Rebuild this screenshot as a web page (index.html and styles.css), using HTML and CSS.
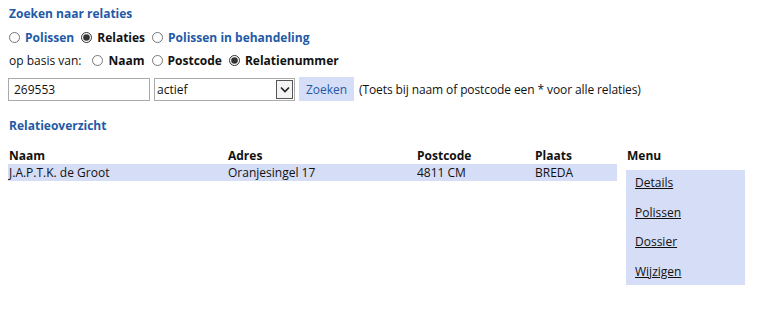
FILE: index.html
```html
<!DOCTYPE html>
<html lang="nl">
<head>
  <meta charset="UTF-8">
  <title>Zoeken naar relaties</title>
  <link rel="stylesheet" href="styles.css">
</head>
<body>
  <div class="page">
    <h2 class="title">Zoeken naar relaties</h2>

    <div class="radio-row">
      <label class="opt link"><input type="radio" name="soort"> Polissen</label>
      <label class="opt"><input type="radio" name="soort" checked> Relaties</label>
      <label class="opt link"><input type="radio" name="soort"> Polissen in behandeling</label>
    </div>

    <div class="radio-row basis">
      <span class="lbl">op basis van:</span>
      <label class="opt"><input type="radio" name="basis"> Naam</label>
      <label class="opt"><input type="radio" name="basis"> Postcode</label>
      <label class="opt"><input type="radio" name="basis" checked> Relatienummer</label>
    </div>

    <div class="search-row">
      <input type="text" class="field" value="269553">
      <div class="select">
        <span class="select-text">actief</span>
        <span class="select-arrow">
          <svg width="10" height="7" viewBox="0 0 10 7"><path d="M1 1.5 L5 5.5 L9 1.5" fill="none" stroke="#222" stroke-width="1.6"/></svg>
        </span>
      </div>
      <button class="btn">Zoeken</button>
      <span class="hint">(Toets bij naam of postcode een * voor alle relaties)</span>
    </div>

    <h2 class="title sub">Relatieoverzicht</h2>

    <div class="overview">
      <table class="results">
        <thead>
          <tr>
            <th class="c-naam">Naam</th>
            <th class="c-adres">Adres</th>
            <th class="c-pc">Postcode</th>
            <th>Plaats</th>
          </tr>
        </thead>
        <tbody>
          <tr>
            <td>J.A.P.T.K. de Groot</td>
            <td>Oranjesingel 17</td>
            <td>4811 CM</td>
            <td>BREDA</td>
          </tr>
        </tbody>
      </table>

      <div class="menu">
        <div class="menu-head">Menu</div>
        <ul class="menu-list">
          <li><a href="#">Details</a></li>
          <li><a href="#">Polissen</a></li>
          <li><a href="#">Dossier</a></li>
          <li><a href="#">Wijzigen</a></li>
        </ul>
      </div>
    </div>
  </div>
</body>
</html>
```

FILE: styles.css
```css
* {
  margin: 0;
  padding: 0;
  box-sizing: border-box;
}

body {
  font-family: 'Open Sans', 'Liberation Sans', sans-serif;
  font-size: 12px;
  color: #111;
  background: #fff;
}

.page {
  padding: 6px 8px;
}

.title {
  font-size: 12px;
  font-weight: bold;
  color: #1f5aa6;
  line-height: 16px;
  margin-left: 1px;
}

.title.sub {
  margin-top: 17px;
}

/* radio rows */
.radio-row {
  display: flex;
  align-items: center;
  height: 23px;
  margin-top: 4px;
}

.radio-row.basis {
  margin-top: 0;
}

.opt {
  display: flex;
  align-items: center;
  font-weight: bold;
  margin-right: 6px;
}

.opt.link {
  color: #1f5aa6;
}

.opt input {
  width: 11px;
  height: 11px;
  margin: 0 5px 0 1px;
  accent-color: #333;
}

.lbl {
  margin: 0 10px 0 1px;
}

/* search row */
.search-row {
  display: flex;
  align-items: center;
  margin-top: 5px;
  height: 24px;
}

.field {
  width: 142px;
  height: 23px;
  border: 1px solid #aaa;
  padding: 0 5px;
  font: inherit;
  color: #111;
}

.select {
  display: flex;
  align-items: stretch;
  width: 141px;
  height: 23px;
  margin-left: 4px;
  border: 1px solid #aaa;
}

.select-text {
  flex: 1;
  padding-left: 2px;
  line-height: 21px;
}

.select-arrow {
  width: 17px;
  margin: 1px;
  border: 1px solid #555;
  background: #f4f4f4;
  display: flex;
  align-items: center;
  justify-content: center;
}

.btn {
  width: 55px;
  height: 24px;
  margin-left: 4px;
  border: none;
  background: #d6ddf6;
  color: #1f5aa6;
  font: inherit;
}

.hint {
  margin-left: 5px;
  letter-spacing: -0.1px;
}

/* overview */
.overview {
  display: flex;
  align-items: flex-start;
  margin-top: 12px;
}

.results {
  width: 609px;
  border-collapse: collapse;
}

.results th {
  text-align: left;
  font-weight: bold;
  height: 18px;
  padding: 0 1px 1px;
  vertical-align: bottom;
  line-height: 15px;
}

.results td {
  background: #d6ddf6;
  height: 17px;
  padding: 0 1px;
  line-height: 17px;
}

.c-naam { width: 219px; }
.c-adres { width: 189px; }
.c-pc { width: 118px; }

.menu {
  margin-left: 9px;
  width: 119px;
}

.menu-head {
  font-weight: bold;
  line-height: 15px;
  height: 24px;
  padding: 2px 0 0 1px;
}

.menu-list {
  list-style: none;
  background: #d6ddf6;
  padding: 5px 9px 5px;
}

.menu-list li {
  line-height: 16px;
  margin-bottom: 13.5px;
}

.menu-list li:last-child {
  margin-bottom: 0;
}

.menu-list a {
  color: #111;
}
```
